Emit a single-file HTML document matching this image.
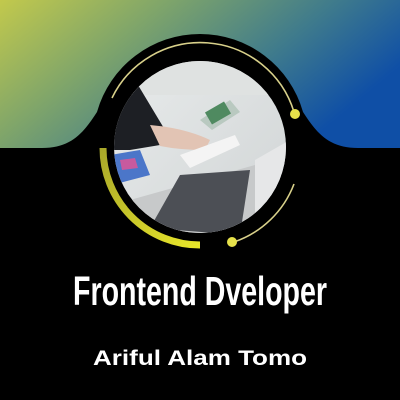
<!DOCTYPE html>
<html><head><meta charset="utf-8"><style>
html,body{margin:0;padding:0;background:#000;}
svg{display:block}
</style></head><body>
<svg width="400" height="400" viewBox="0 0 400 400" xmlns="http://www.w3.org/2000/svg">
<defs>
<linearGradient id="bg" x1="0" y1="0" x2="1" y2="0.45">
<stop offset="0" stop-color="#c2c94c"/>
<stop offset="0.35" stop-color="#7fa56a"/>
<stop offset="0.7" stop-color="#3f7b8c"/>
<stop offset="1" stop-color="#0f4fa6"/>
</linearGradient>
<linearGradient id="ya" x1="0" y1="0" x2="1" y2="1">
<stop offset="0" stop-color="#a9a82a"/>
<stop offset="1" stop-color="#e8e62a"/>
</linearGradient>
<clipPath id="pc"><circle cx="200" cy="147" r="86"/></clipPath>
<linearGradient id="desk" x1="0" y1="0" x2="1" y2="1">
<stop offset="0" stop-color="#e9ecec"/>
<stop offset="1" stop-color="#cfd3d4"/>
</linearGradient>
</defs>
<rect width="400" height="400" fill="#000"/>
<rect width="400" height="148" fill="url(#bg)"/>
<path d="M42 148 C72 148 84 132 97 112 A107 107 0 0 1 303 112 C316 132 328 148 358 148 Z" fill="#000"/>
<g clip-path="url(#pc)">
<rect x="110" y="55" width="180" height="185" fill="url(#desk)"/>
<rect x="110" y="55" width="180" height="40" fill="#dfe2e1"/>
<path d="M110 80 L135 80 L165 130 L160 145 L130 150 L110 150 Z" fill="#1d1f24"/>
<path d="M150 125 Q185 128 210 140 L205 150 Q180 150 160 146 Z" fill="#e2c4b4"/>
<path d="M200 120 L230 100 L240 112 L212 130 Z" fill="#b9c9c0"/>
<rect x="207" y="106" width="22" height="14" fill="#4f8a60" transform="rotate(-30 218 113)"/>
<path d="M180 155 L235 135 L240 145 L190 168 Z" fill="#f4f4f4"/>
<path d="M110 155 L140 150 L150 175 L112 185 Z" fill="#4b76c9"/>
<path d="M120 160 L135 158 L138 168 L122 170 Z" fill="#c85a9e"/>
<path d="M130 200 L255 165 L290 180 L290 240 L150 240 Z" fill="#c7c9ca"/>
<path d="M150 228 L180 175 L250 170 L240 235 Z" fill="#4c4f55"/>
<path d="M255 160 L290 140 L290 235 L255 235 Z" fill="#e6e7e8"/>
</g>
<path d="M112 98 A98 98 0 0 1 294 112" fill="none" stroke="#d8d08a" stroke-width="1.6"/>
<circle cx="295" cy="114" r="5" fill="#e6e14a"/>
<path d="M294 184 A98 98 0 0 1 234 242" fill="none" stroke="#d8d08a" stroke-width="1.6"/>
<circle cx="232" cy="242" r="5" fill="#e6e14a"/>
<path d="M103 148 A97 97 0 0 0 200 245" fill="none" stroke="url(#ya)" stroke-width="7"/>
<text x="200" y="305" text-anchor="middle" textLength="254" lengthAdjust="spacingAndGlyphs" font-family="Liberation Sans Narrow, Liberation Sans, sans-serif" font-weight="bold" font-size="41" fill="#fff">Frontend Dveloper</text>
<text x="200" y="365" text-anchor="middle" textLength="214" lengthAdjust="spacingAndGlyphs" font-family="Liberation Sans, sans-serif" font-weight="bold" font-size="21" fill="#fff">Ariful Alam Tomo</text>
</svg>
</body></html>
